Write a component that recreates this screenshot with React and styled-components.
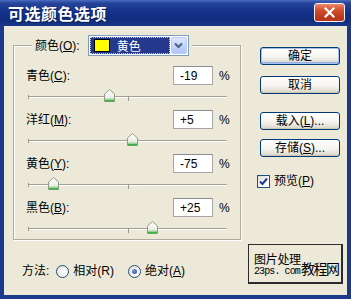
import React from 'react';
import styled, { createGlobalStyle } from 'styled-components';

const Global = createGlobalStyle`
  html, body { margin: 0; padding: 0; background: #ece9d8; }
  body {
    font-family: "Liberation Sans", "Noto Sans CJK SC", sans-serif;
    font-size: 12px;
    color: #000;
  }
  * { box-sizing: border-box; }
`;

const Window = styled.div`
  width: 351px;
  height: 299px;
  display: flex;
  flex-direction: column;
  background: #ece9d8;
  overflow: hidden;
`;

const TitleBar = styled.div`
  height: 26px;
  flex: none;
  display: flex;
  align-items: center;
  justify-content: space-between;
  padding: 0 6px 0 8px;
  background: linear-gradient(180deg, #4a6bbf 0%, #26459a 12%, #15318a 45%, #112d7c 80%, #1a398b 100%);
`;

const Title = styled.div`
  color: #fff;
  font-family: "Noto Sans CJK SC", sans-serif;
  font-size: 16px;
  font-weight: 700;
  letter-spacing: 0.5px;
  text-shadow: 1px 1px 0 #0b1d55;
  line-height: 1;
`;

const CloseButton = styled.div`
  width: 31px;
  height: 19px;
  margin-top: -2px;
  border: 1px solid #f4f4f4;
  border-radius: 3px;
  background: linear-gradient(180deg, #e88a6e 0%, #d3502f 35%, #c13c1e 70%, #b3371d 100%);
  display: flex;
  align-items: center;
  justify-content: center;
`;

const Frame = styled.div`
  flex: 1;
  display: flex;
  flex-direction: column;
  border: 4px solid #1b3a8c;
  border-top: none;
  background: #ece9d8;
`;

const MainRow = styled.div`
  display: flex;
  align-items: flex-start;
  padding-top: 9px;
`;

const Group = styled.fieldset`
  margin: 0 0 0 9px;
  padding: 10px 0 0 0;
  width: 228px;
  min-width: 0;
  border: 1px solid #aeab9c;
  box-shadow: inset 1px 1px 0 #fff, 1px 1px 0 #fff;
`;

const Legend = styled.legend`
  margin-left: 18px;
  padding: 0 3px;
  background: #ece9d8;
`;

const LegendInner = styled.div`
  display: flex;
  align-items: center;
  gap: 8px;
  height: 21px;
`;

const Label = styled.span`
  flex: ${p => (p.$grow ? 1 : 'none')};
  white-space: nowrap;
  line-height: 14px;
`;

const Combo = styled.div`
  width: 101px;
  height: 21px;
  border: 1px solid #7f9db9;
  background: #fff;
  display: flex;
  align-items: stretch;
  padding: 1px;
`;

const ComboValue = styled.div`
  flex: 1;
  margin-right: 1px;
  background: #24398c;
  outline: 1px dotted #c8c8c8;
  outline-offset: -1px;
  display: flex;
  align-items: center;
  gap: 7px;
  padding-left: 4px;
  color: #fff;
`;

const Swatch = styled.span`
  width: 16px;
  height: 13px;
  background: ${p => p.$color};
  border: 1px solid #000;
`;

const ComboButton = styled.div`
  width: 16px;
  border: 1px solid #b9cdf6;
  border-radius: 2px;
  background: linear-gradient(180deg, #dce6fd 0%, #c3d4fb 50%, #b1c6f5 100%);
  display: flex;
  align-items: center;
  justify-content: center;
`;

const Controls = styled.div`
  display: flex;
  flex-direction: column;
  gap: 3px;
`;

const Block = styled.div`
  display: flex;
  flex-direction: column;
`;

const InputRow = styled.div`
  height: 19px;
  display: flex;
  align-items: center;
  padding: 0 12px;
`;

const NumberBox = styled.div`
  width: 40px;
  height: 19px;
  border: 1px solid #a7a6aa;
  border-top-color: #8d8c90;
  background: #fff;
  padding-left: 6px;
  display: flex;
  align-items: center;
  line-height: 14px;
`;

const Percent = styled.span`
  margin-left: 6px;
  width: 9px;
  line-height: 14px;
`;

const SliderRow = styled.div`
  height: 22px;
  margin: 0 13px 0 14px;
  padding-top: 11px;
`;

const Track = styled.div`
  position: relative;
  height: 2px;
  border-top: 1px solid #a3a092;
  border-bottom: 1px solid #fff;
  border-radius: 1px;
`;

const Tick = styled.span`
  position: absolute;
  top: ${p => (p.$end ? '-2px' : '-1px')};
  left: ${p => p.$at};
  width: 1px;
  height: ${p => (p.$end ? '4px' : '5px')};
  background: #9a988a;
`;

const Thumb = styled.svg`
  position: absolute;
  top: -8px;
  width: 11px;
  height: 13px;
  margin-left: -5px;
`;

const RightCol = styled.div`
  margin-left: 19px;
  padding-top: 12px;
  width: 80px;
  display: flex;
  flex-direction: column;
`;

const Button = styled.div`
  height: 18px;
  margin-top: ${p => p.$mt || 0}px;
  border: 1px solid #003c74;
  border-radius: 3px;
  background: linear-gradient(180deg, #ffffff 0%, #f5f4ef 55%, #e3e0d6 85%, #d6d0c5 100%);
  box-shadow: ${p => (p.$default ? 'inset 0 0 0 1px #a7c0ee, inset 0 -1px 0 1px #8fb0ea' : 'inset 0 -1px 0 #ccc6b8')};
  display: flex;
  align-items: center;
  justify-content: center;
  line-height: 14px;
  white-space: nowrap;
`;

const CheckRow = styled.div`
  margin-top: 17px;
  margin-left: -3px;
  display: flex;
  align-items: center;
  gap: 4px;
  line-height: 14px;
`;

const CheckBox = styled.span`
  width: 13px;
  height: 13px;
  border: 1px solid #1c5180;
  background: linear-gradient(135deg, #dcdcd7 0%, #fff 80%);
  display: flex;
  align-items: center;
  justify-content: center;
`;

const BottomRow = styled.div`
  display: flex;
  align-items: flex-start;
  padding: 4px 4px 0 18px;
`;

const Method = styled.div`
  margin-top: 19px;
  display: flex;
  align-items: center;
  line-height: 16px;
`;

const RadioItem = styled.label`
  display: flex;
  align-items: center;
  gap: 4px;
  margin-left: ${p => p.$ml}px;
`;

const Radio = styled.span`
  width: 13px;
  height: 13px;
  border-radius: 50%;
  border: 1px solid #1c5180;
  background: radial-gradient(circle at 65% 65%, #ffffff 0%, #f1f0ea 50%, #d9d8d0 100%);
  display: flex;
  align-items: center;
  justify-content: center;
  &::after {
    content: '';
    width: 5px;
    height: 5px;
    border-radius: 50%;
    background: ${p => (p.$checked ? 'radial-gradient(circle at 35% 35%, #7e93d6, #2b45a0)' : 'transparent')};
  }
`;

const Mark = styled.div`
  margin-left: auto;
  width: 95px;
  height: 40px;
  border: 2px solid #2c2c2c;
  border-width: 1px 2px 2px 1px;
  padding: 7px 0 0 5px;
  display: grid;
  grid-template-columns: 47px auto;
  grid-template-rows: 13px 13px;
  font-family: "Noto Sans CJK SC", sans-serif;
  background: #ece9d8;
  overflow: hidden;
  white-space: nowrap;
`;

const MarkTop = styled.span`
  font-size: 12px;
  line-height: 13px;
  letter-spacing: -0.3px;
`;

const MarkUrl = styled.span`
  font-family: "Liberation Mono", monospace;
  font-size: 10px;
  line-height: 13px;
  letter-spacing: -0.9px;
  grid-row: 2;
`;

const MarkBig = styled.span`
  grid-column: 2;
  grid-row: 1 / 3;
  align-self: end;
  font-size: 14px;
  line-height: 20px;
  letter-spacing: -1.5px;
`;

const channels = [
  { name: '青色', key: 'C', value: -19 },
  { name: '洋红', key: 'M', value: 5 },
  { name: '黄色', key: 'Y', value: -75 },
  { name: '黑色', key: 'B', value: 25 },
];

const fmt = v => (v > 0 ? `+${v}` : `${v}`);

function ThumbIcon({ pct }) {
  return (
    <Thumb viewBox="0 0 11 13" style={{ left: `${pct}%` }}>
      <defs>
        <linearGradient id="tg" x1="0" y1="0" x2="0" y2="1">
          <stop offset="0" stopColor="#ffffff" />
          <stop offset="1" stopColor="#e4e3dc" />
        </linearGradient>
      </defs>
      <path d="M0.5 5 L5.5 0.5 L10.5 5 V12.5 H0.5 Z" fill="url(#tg)" stroke="#8f9c8a" />
      <path d="M1 11.5 H10" stroke="#3fb13f" strokeWidth="2" />
      <path d="M1 10 H10" stroke="#9ddc9d" strokeWidth="1" />
    </Thumb>
  );
}

function Channel({ name, k, value }) {
  const pct = (value + 100) / 2;
  return (
    <Block>
      <InputRow>
        <Label $grow>
          {name}(<u>{k}</u>):
        </Label>
        <NumberBox>{fmt(value)}</NumberBox>
        <Percent>%</Percent>
      </InputRow>
      <SliderRow>
        <Track>
          <Tick $end $at="0" />
          <Tick $at="50%" />
          <ThumbIcon pct={pct} />
        </Track>
      </SliderRow>
    </Block>
  );
}

export default function App() {
  return (
    <>
      <Global />
      <Window>
        <TitleBar>
          <Title>可选颜色选项</Title>
          <CloseButton>
            <svg width="11" height="11" viewBox="0 0 11 11">
              <path d="M1.5 1.5 L9.5 9.5 M9.5 1.5 L1.5 9.5" stroke="#fff" strokeWidth="2.2" strokeLinecap="square" />
            </svg>
          </CloseButton>
        </TitleBar>
        <Frame>
          <MainRow>
            <Group>
              <Legend>
                <LegendInner>
                  <Label>
                    颜色(<u>O</u>):
                  </Label>
                  <Combo>
                    <ComboValue>
                      <Swatch $color="#ffff00" />
                      <span>黄色</span>
                    </ComboValue>
                    <ComboButton>
                      <svg width="9" height="7" viewBox="0 0 9 7">
                        <path d="M1 1.5 L4.5 5 L8 1.5" stroke="#4d6185" strokeWidth="2" fill="none" />
                      </svg>
                    </ComboButton>
                  </Combo>
                </LegendInner>
              </Legend>
              <Controls>
                {channels.map(c => (
                  <Channel key={c.key} name={c.name} k={c.key} value={c.value} />
                ))}
              </Controls>
            </Group>
            <RightCol>
              <Button $default>确定</Button>
              <Button $mt={11}>取消</Button>
              <Button $mt={18}>
                载入(<u>L</u>)...
              </Button>
              <Button $mt={9}>
                存储(<u>S</u>)...
              </Button>
              <CheckRow>
                <CheckBox>
                  <svg width="9" height="9" viewBox="0 0 9 9">
                    <path d="M1 4.5 L3.5 7 L8 1.5" stroke="#1f3a9a" strokeWidth="2" fill="none" />
                  </svg>
                </CheckBox>
                <span>
                  预览(<u>P</u>)
                </span>
              </CheckRow>
            </RightCol>
          </MainRow>
          <BottomRow>
            <Method>
              <span>方法:</span>
              <RadioItem $ml={7}>
                <Radio />
                <span>相对(R)</span>
              </RadioItem>
              <RadioItem $ml={14}>
                <Radio $checked />
                <span>
                  绝对(<u>A</u>)
                </span>
              </RadioItem>
            </Method>
            <Mark>
              <MarkTop>图片处理</MarkTop>
              <MarkUrl>23ps. com</MarkUrl>
              <MarkBig>教程网</MarkBig>
            </Mark>
          </BottomRow>
        </Frame>
      </Window>
    </>
  );
}
